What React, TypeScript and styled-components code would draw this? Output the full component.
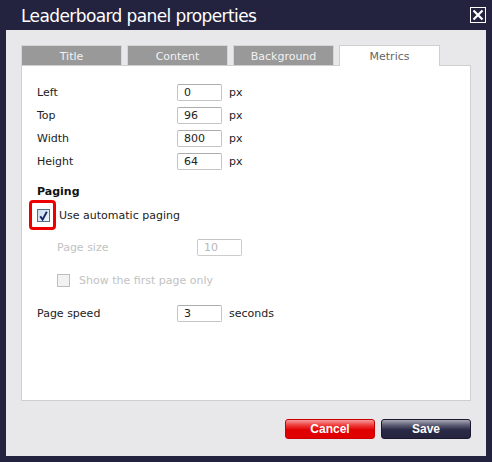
import styled, { createGlobalStyle } from 'styled-components';

const GlobalStyle = createGlobalStyle`
  html, body {
    margin: 0;
    padding: 0;
    background: #24233f;
  }
  * {
    box-sizing: border-box;
  }
`;

const Window = styled.div`
  width: 492px;
  height: 462px;
  background: #24233f;
  display: flex;
  flex-direction: column;
  padding: 0 6px 6px 6px;
  font-family: 'DejaVu Sans', Verdana, sans-serif;
`;

const Header = styled.div`
  height: 30px;
  display: flex;
  align-items: flex-start;
  justify-content: space-between;
  padding-left: 15px;
`;

const Title = styled.h1`
  margin: 5px 0 0 0;
  font-size: 17px;
  letter-spacing: -0.6px;
  line-height: 22px;
  font-weight: normal;
  color: #ffffff;
`;

const CloseButton = styled.button`
  margin-top: 7px;
  width: 16px;
  height: 16px;
  padding: 0;
  border: 1px solid #ffffff;
  background: transparent;
  display: flex;
  align-items: center;
  justify-content: center;
  cursor: pointer;
`;

const Panel = styled.div`
  flex: 1;
  background: #e8e8ea;
  padding: 15px 15px 17px 15px;
  display: flex;
  flex-direction: column;
`;

const TabRow = styled.div`
  display: flex;
  gap: 5px;
  height: 20px;
  position: relative;
  z-index: 1;
`;

const Tab = styled.div<{ $active?: boolean }>`
  width: 101px;
  height: ${({ $active }) => ($active ? '21px' : '20px')};
  background: ${({ $active }) => ($active ? '#ffffff' : '#999999')};
  border: 1px solid ${({ $active }) => ($active ? '#cfcfcf' : '#d6d6d6')};
  border-bottom: none;
  color: ${({ $active }) => ($active ? '#666666' : '#f2f2f2')};
  font-size: 11px;
  display: flex;
  align-items: center;
  justify-content: center;
  padding-top: 1px;
`;

const ContentBox = styled.div`
  height: 336px;
  background: #ffffff;
  border: 1px solid #cfcfcf;
  padding: 18px 15px;
  display: flex;
  flex-direction: column;
`;

const FormRow = styled.div<{ $indent?: boolean; $gap?: number }>`
  display: grid;
  grid-template-columns: 140px 45px auto;
  align-items: center;
  height: 17px;
  margin-top: ${({ $gap }) => $gap ?? 0}px;
  margin-left: ${({ $indent }) => ($indent ? '20px' : '0')};
`;

const Label = styled.span<{ $disabled?: boolean }>`
  font-size: 11px;
  color: ${({ $disabled }) => ($disabled ? '#c2c2c2' : '#222222')};
`;

const TextInput = styled.div<{ $disabled?: boolean }>`
  width: 45px;
  height: 17px;
  border: 1px solid ${({ $disabled }) => ($disabled ? '#cccccc' : '#c4c4c4')};
  border-top-color: ${({ $disabled }) => ($disabled ? '#c4c4c4' : '#adadad')};
  border-radius: 2px;
  padding-left: 6px;
  font-size: 11px;
  line-height: 15px;
  color: ${({ $disabled }) => ($disabled ? '#b8b8b8' : '#222222')};
  background: #ffffff;
`;

const Unit = styled.span`
  margin-left: 7px;
  font-size: 11px;
  color: #222222;
`;

const SectionHeading = styled.div`
  margin-top: 15px;
  font-size: 11px;
  line-height: 14px;
  font-weight: bold;
  color: #111111;
`;

const CheckRow = styled.div<{ $indent?: boolean; $gap?: number }>`
  display: flex;
  align-items: center;
  gap: 9px;
  height: 17px;
  margin-top: ${({ $gap }) => $gap ?? 0}px;
  margin-left: ${({ $indent }) => ($indent ? '20px' : '0')};
`;

const CheckBox = styled.span<{ $checked?: boolean; $disabled?: boolean }>`
  position: relative;
  width: 13px;
  height: 13px;
  flex: 0 0 13px;
  border: 1px solid ${({ $disabled }) => ($disabled ? '#bdbdbd' : '#55708a')};
  background: ${({ $disabled }) =>
    $disabled ? '#f2f2f2' : 'linear-gradient(135deg, #c9dcec 0%, #eef5fb 100%)'};
  display: flex;
  align-items: center;
  justify-content: center;
`;

const Highlight = styled.span`
  position: absolute;
  left: -9px;
  top: -10px;
  width: 27px;
  height: 30px;
  border: 3px solid #ee0000;
  border-radius: 4px;
`;

const Footer = styled.div`
  margin-top: 18px;
  display: flex;
  justify-content: flex-end;
  gap: 6px;
`;

const Button = styled.button<{ $variant: 'danger' | 'dark' }>`
  width: 90px;
  height: 20px;
  border-radius: 3px;
  border: 1px solid ${({ $variant }) => ($variant === 'danger' ? '#c80000' : '#1a1930')};
  background: ${({ $variant }) =>
    $variant === 'danger'
      ? 'linear-gradient(to bottom, #f79a9a 0%, #ee3a3a 30%, #e00000 55%, #e00000 100%)'
      : 'linear-gradient(to bottom, #a7a7b4 0%, #5a5a72 30%, #2b2a47 55%, #26253f 100%)'};
  color: #ffffff;
  font-family: 'Liberation Sans', Arial, sans-serif;
  font-weight: bold;
  font-size: 12px;
  padding: 0;
  cursor: pointer;
`;

const metrics = [
  { label: 'Left', value: '0' },
  { label: 'Top', value: '96' },
  { label: 'Width', value: '800' },
  { label: 'Height', value: '64' },
];

const tabs = ['Title', 'Content', 'Background', 'Metrics'];

export default function App() {
  return (
    <>
      <GlobalStyle />
      <Window>
        <Header>
          <Title>Leaderboard panel properties</Title>
          <CloseButton aria-label="Close">
            <svg width="12" height="12" viewBox="0 0 12 12">
              <path d="M1.5 1.5 L10.5 10.5 M10.5 1.5 L1.5 10.5" stroke="#ffffff" strokeWidth="2.2" />
            </svg>
          </CloseButton>
        </Header>
        <Panel>
          <TabRow>
            {tabs.map((t) => (
              <Tab key={t} $active={t === 'Metrics'}>
                {t}
              </Tab>
            ))}
          </TabRow>
          <ContentBox>
            {metrics.map((m, i) => (
              <FormRow key={m.label} $gap={i === 0 ? 0 : 6}>
                <Label>{m.label}</Label>
                <TextInput>{m.value}</TextInput>
                <Unit>px</Unit>
              </FormRow>
            ))}

            <SectionHeading>Paging</SectionHeading>
            <CheckRow $gap={8}>
              <CheckBox $checked>
                <Highlight />
                <svg width="9" height="10" viewBox="0 0 9 10">
                  <path d="M1.2 5.2 L3.6 8.6 L7.8 0.8" stroke="#16246a" strokeWidth="1.9" fill="none" />
                </svg>
              </CheckBox>
              <Label>Use automatic paging</Label>
            </CheckRow>

            <FormRow $indent $gap={15}>
              <Label $disabled>Page size</Label>
              <TextInput $disabled>10</TextInput>
              <span />
            </FormRow>

            <CheckRow $indent $gap={16}>
              <CheckBox $disabled />
              <Label $disabled>Show the first page only</Label>
            </CheckRow>

            <FormRow $gap={16}>
              <Label>Page speed</Label>
              <TextInput>3</TextInput>
              <Unit>seconds</Unit>
            </FormRow>
          </ContentBox>
          <Footer>
            <Button $variant="danger">Cancel</Button>
            <Button $variant="dark">Save</Button>
          </Footer>
        </Panel>
      </Window>
    </>
  );
}
